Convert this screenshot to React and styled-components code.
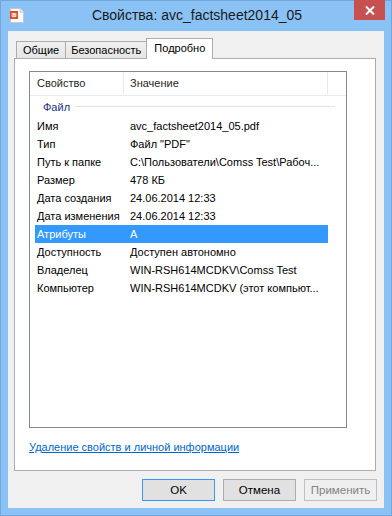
import React from "react";
import styled, { createGlobalStyle } from "styled-components";

const Global = createGlobalStyle`
  html, body { margin: 0; padding: 0; }
  body {
    width: 392px; height: 516px; overflow: hidden;
    font-family: "Liberation Sans", Arial, sans-serif;
    font-size: 11px; color: #000;
  }
  * { box-sizing: border-box; }
`;

const Window = styled.div`
  width: 392px;
  height: 516px;
  background: #8bc2f6;
  box-shadow: inset 0 0 0 1px #6fa6dc;
  display: flex;
  flex-direction: column;
`;

const TitleBar = styled.div`
  height: 31px;
  display: grid;
  grid-template-columns: 1fr auto 1fr;
  align-items: start;
`;

const IconBox = styled.div`
  padding: 7px 0 0 9px;
  height: 31px;
`;

const Title = styled.div`
  font-size: 14px;
  line-height: 31px;
  color: #1a1a1a;
  white-space: nowrap;
  padding-left: 2px;
`;

const CloseWrap = styled.div`
  display: flex;
  justify-content: flex-end;
  padding-right: 7px;
`;

const CloseButton = styled.div`
  width: 31px;
  height: 20px;
  background: #c75050;
  display: flex;
  align-items: center;
  justify-content: center;
`;

const Client = styled.div`
  margin: 0 8px 8px 8px;
  height: 477px;
  background: #f0f0f0;
  padding: 7px 8px 0 6px;
  display: flex;
  flex-direction: column;
`;

const TabStrip = styled.div`
  display: flex;
  align-items: flex-end;
  height: 20px;
  padding-left: 2px;
`;

const Tab = styled.div`
  position: relative;
  z-index: ${(p) => (p.$active ? 2 : 1)};
  height: ${(p) => (p.$active ? "21px" : "17px")};
  margin-bottom: ${(p) => (p.$active ? "-1px" : "0")};
  margin-left: ${(p) => (p.$first ? "0" : "-1px")};
  padding: ${(p) => (p.$active ? "0 7px" : p.$first ? "0 6px" : "0 5px")};
  border: 1px solid #acacac;
  border-bottom: none;
  background: ${(p) => (p.$active ? "#fff" : "linear-gradient(#f0f0f0, #e5e5e5)")};
  line-height: ${(p) => (p.$active ? "18px" : "16px")};
  font-size: 11px;
  white-space: nowrap;
`;

const Panel = styled.div`
  height: 413px;
  background: #fff;
  border: 1px solid #adadad;
  padding: 12px 0 0 14px;
  display: flex;
  flex-direction: column;
`;

const List = styled.div`
  width: 318px;
  height: 357px;
  border: 1px solid #828790;
  background: #fff;
  display: flex;
  flex-direction: column;
`;

const Header = styled.div`
  height: 24px;
  display: flex;
  border-bottom: 1px solid #e5ebf4;
`;

const HeaderCell = styled.div`
  width: ${(p) => p.$w}px;
  padding-left: ${(p) => p.$pad}px;
  border-right: 1px solid #e5e9f0;
  line-height: 23px;
  color: #1f1f1f;
  font-size: 11px;
  margin-bottom: 1px;
`;

const GroupRow = styled.div`
  height: 21px;
  display: flex;
  align-items: center;
  padding: 0 11px 0 13px;
`;

const GroupTitle = styled.span`
  color: #1e3287;
  font-size: 11px;
`;

const GroupLine = styled.div`
  flex: 1;
  height: 1px;
  background: #dbe4f0;
  margin-left: 5px;
`;

const Row = styled.div`
  margin-left: 5px;
  width: 293px;
  height: 18px;
  display: flex;
  align-items: center;
  background: ${(p) => (p.$selected ? "#3399ff" : "transparent")};
  color: ${(p) => (p.$selected ? "#fff" : "#000")};
  font-size: 11px;
`;

const Cell = styled.div`
  width: ${(p) => (p.$w ? `${p.$w}px` : "auto")};
  flex: ${(p) => (p.$w ? "none" : "1")};
  padding-left: 2px;
  white-space: nowrap;
  overflow: hidden;
  text-overflow: ellipsis;
`;

const Link = styled.a`
  margin-top: 12px;
  color: #0066cc;
  text-decoration: underline;
  font-size: 11px;
  line-height: 14px;
  cursor: pointer;
  align-self: flex-start;
`;

const ButtonRow = styled.div`
  display: flex;
  justify-content: flex-end;
  gap: 8px;
  margin-top: 8px;
  margin-right: -1px;
`;

const Button = styled.div`
  width: 73px;
  height: 22px;
  border: 1px solid ${(p) => (p.$default ? "#3399ff" : p.$disabled ? "#bfbfbf" : "#acacac")};
  background: ${(p) => (p.$disabled ? "#efefef" : "#e1e1e1")};
  color: ${(p) => (p.$disabled ? "#838383" : "#000")};
  display: flex;
  align-items: center;
  justify-content: center;
  font-size: 11.5px;
`;

const FileIcon = () => (
  <svg width="16" height="16" viewBox="0 0 16 16">
    <path d="M1.5 1.5 H11 L14.5 5 V15.5 H1.5 Z" fill="#fff" stroke="#c8c8c8" />
    <path d="M11 1.5 V5 H14.5" fill="#eee" stroke="#c8c8c8" />
    <rect x="1" y="4" width="8" height="8" fill="#e04b2d" />
    <path d="M3.2 6 v3.6 h3.6 V6 M4.5 6 v2.4 h1.1 V6" fill="none" stroke="#fff" strokeWidth="0.9" />
  </svg>
);

const CloseIcon = () => (
  <svg width="10" height="9" viewBox="0 0 10 9">
    <path d="M1 0.5 L9 8.5 M9 0.5 L1 8.5" stroke="#fff" strokeWidth="2" />
  </svg>
);

const rows = [
  ["Имя", "avc_factsheet2014_05.pdf"],
  ["Тип", 'Файл "PDF"'],
  ["Путь к папке", "C:\\Пользователи\\Comss Test\\Рабоч..."],
  ["Размер", "478 КБ"],
  ["Дата создания", "24.06.2014 12:33"],
  ["Дата изменения", "24.06.2014 12:33"],
  ["Атрибуты", "A", true],
  ["Доступность", "Доступен автономно"],
  ["Владелец", "WIN-RSH614MCDKV\\Comss Test"],
  ["Компьютер", "WIN-RSH614MCDKV (этот компьют..."],
];

export default function App() {
  return (
    <>
      <Global />
      <Window>
        <TitleBar>
          <IconBox>
            <FileIcon />
          </IconBox>
          <Title>Свойства: avc_factsheet2014_05</Title>
          <CloseWrap>
            <CloseButton>
              <CloseIcon />
            </CloseButton>
          </CloseWrap>
        </TitleBar>
        <Client>
          <TabStrip>
            <Tab $first>Общие</Tab>
            <Tab>Безопасность</Tab>
            <Tab $active>Подробно</Tab>
          </TabStrip>
          <Panel>
            <List>
              <Header>
                <HeaderCell $w={94} $pad={7}>Свойство</HeaderCell>
                <HeaderCell $w={204} $pad={6}>Значение</HeaderCell>
              </Header>
              <GroupRow>
                <GroupTitle>Файл</GroupTitle>
                <GroupLine />
              </GroupRow>
              {rows.map(([k, v, sel]) => (
                <Row key={k} $selected={sel}>
                  <Cell $w={93}>{k}</Cell>
                  <Cell>{v}</Cell>
                </Row>
              ))}
            </List>
            <Link>Удаление свойств и личной информации</Link>
          </Panel>
          <ButtonRow>
            <Button $default>OK</Button>
            <Button>Отмена</Button>
            <Button $disabled>Применить</Button>
          </ButtonRow>
        </Client>
      </Window>
    </>
  );
}
